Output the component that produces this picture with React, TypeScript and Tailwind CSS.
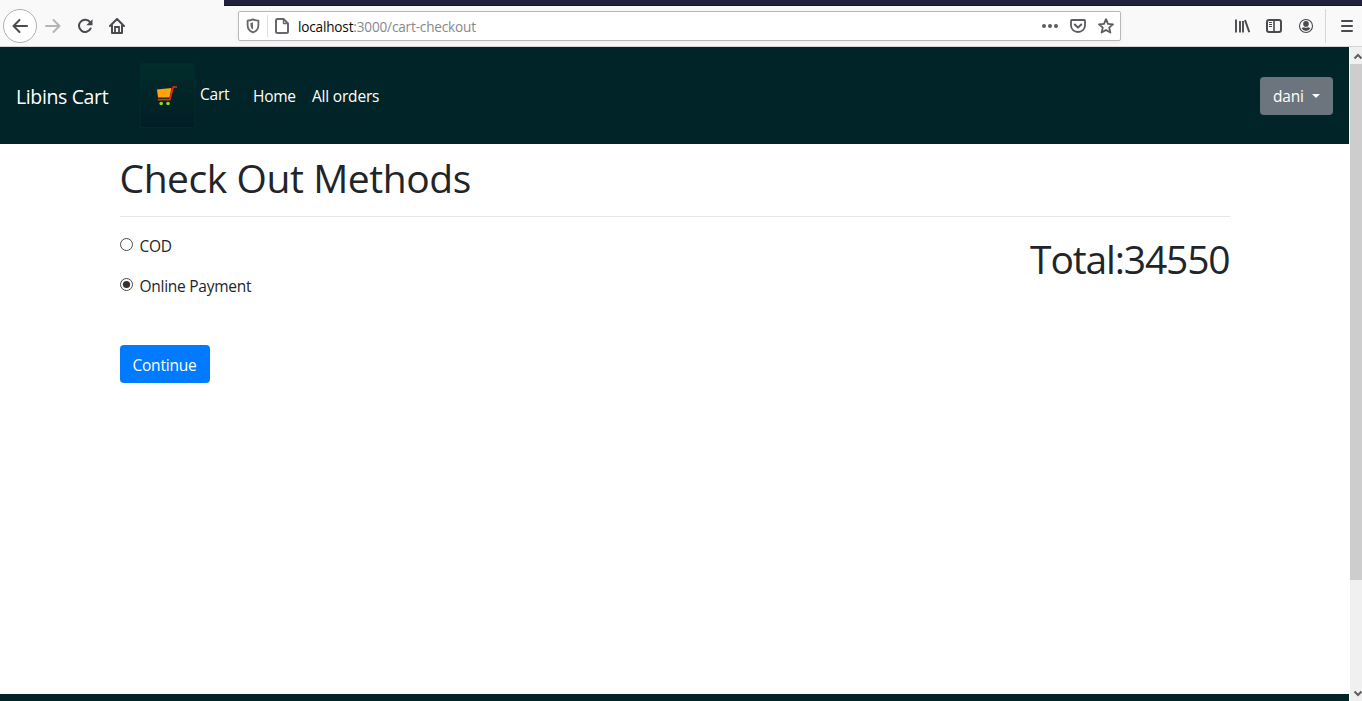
import React, { useState } from "react";

function BrowserToolbar() {
  return (
    <header className="flex h-[47px] flex-col border-b border-[#d4d4d6] bg-[#f9f9fa]">
      <div className="ml-[224px] h-[6px] shrink-0 border-b border-[#17122b] bg-[#20203f]" />
      <div className="flex h-10 items-center text-[#4a4a4f]">
        <button className="ml-[3px] flex size-[34px] items-center justify-center rounded-full border border-[#b1b1b3] bg-white">
          <svg width="16" height="16" viewBox="0 0 16 16" fill="none" stroke="#4a4a4f" strokeWidth="2" strokeLinecap="round" strokeLinejoin="round">
            <path d="M15 8H1.5M7.5 2l-6 6 6 6" />
          </svg>
        </button>
        <svg className="ml-2" width="16" height="16" viewBox="0 0 16 16" fill="none" stroke="#b4b4b6" strokeWidth="2" strokeLinecap="round" strokeLinejoin="round">
          <path d="M1 8h13.500M8.500 2l6 6-6 6" />
        </svg>
        <svg className="ml-4" width="16" height="16" viewBox="0 0 16 16">
          <path d="M13 4.200A6.100 6.100 0 1 0 13.600 10.500" fill="none" stroke="#4a4a4f" strokeWidth="2" strokeLinecap="round" />
          <path d="M15.500 1.200v6h-6.200z" fill="#4a4a4f" />
        </svg>
        <svg className="ml-4" width="16" height="16" viewBox="0 0 16 16" fill="none" stroke="#4a4a4f" strokeWidth="2" strokeLinecap="round" strokeLinejoin="round">
          <path d="M1 8l7-7 7 7M3 7.500V15h10V7.500" />
          <path d="M6 14.500V9h4v5.500" strokeWidth="1.800" strokeLinecap="butt" strokeLinejoin="miter" />
        </svg>
        <div className="ml-[113px] flex h-[30px] w-[883px] items-center rounded-[2px] border border-[#b9b9bb] bg-white shadow-[0_1px_4px_rgba(0,0,0,0.06)]">
          <svg className="ml-[6px]" width="16" height="16" viewBox="0 0 16 16" fill="none" stroke="#68686c" strokeWidth="1.800" strokeLinejoin="round">
            <path d="M8 1.400c2 .9 3.700 1.200 5.400 1.300v4.500c0 3.700-2.200 6-5.400 7.200-3.200-1.200-5.400-3.500-5.400-7.200V2.700C4.300 2.600 6 2.300 8 1.400z" />
            <path d="M8 4.300v7.300C6.300 10.700 5.500 9.300 5.500 7.300V4.900C6.400 4.800 7.200 4.600 8 4.300z" fill="#68686c" stroke="none" />
          </svg>
          <div className="ml-[6px] h-[22px] w-px bg-[#dddddf]" />
          <svg className="ml-[6px]" width="16" height="16" viewBox="0 0 16 16" fill="none" stroke="#68686c" strokeWidth="2" strokeLinejoin="round">
            <path d="M3.500 1h6L14 5.500v8c0 1-.5 1.500-1.500 1.500h-9C2.500 15 2 14.500 2 13.500v-11C2 1.500 2.500 1 3.500 1z" />
            <path d="M9.500 1v4.500H14" strokeWidth="1.400" />
          </svg>
          <span className="ml-[8px] flex-1 whitespace-pre pt-[2px] font-['Open_Sans','Noto_Sans',sans-serif] text-[13.600px] leading-5 tracking-[-0.180px] text-[#88888b]">
            <span className="text-[#0c0c0d]">localhost</span>:3000/cart-checkout
          </span>
          <svg width="16" height="16" viewBox="0 0 16 16" fill="#5c5c60">
            <circle cx="2" cy="8" r="2" /><circle cx="8" cy="8" r="2" /><circle cx="14" cy="8" r="2" />
          </svg>
          <svg className="ml-3" width="16" height="16" viewBox="0 0 16 16" fill="none" stroke="#5c5c60" strokeWidth="2" strokeLinecap="round" strokeLinejoin="round">
            <path d="M1.800 2h12.400c.5 0 .8.300.8.800V7.500a7 6.500 0 0 1-14 0V2.800c0-.5.300-.8.800-.8z" strokeWidth="1.800" />
            <path d="M4.800 6.500L8 9.600l3.200-3.100" />
          </svg>
          <svg className="mr-[6px] ml-3" width="16" height="16" viewBox="0 0 16 16" fill="none" stroke="#5c5c60" strokeWidth="1.800" strokeLinejoin="round">
            <path d="M8 1.200l2 4.600 5 .5-3.800 3.300 1.200 5L8 12l-4.400 2.600 1.200-5L1 6.300l5-.5z" />
          </svg>
        </div>
        <svg className="ml-[113px]" width="16" height="16" viewBox="0 0 16 16" fill="none" stroke="#4a4a4f" strokeWidth="2">
          <path d="M2 1.500v13M6 3v11.500M9 3v11.500" strokeWidth="1.900" />
          <path d="M11 2l4.300 12.200" />
        </svg>
        <svg className="ml-4" width="16" height="16" viewBox="0 0 16 16" fill="none" stroke="#4a4a4f" strokeWidth="2">
          <rect x="1" y="2" width="14" height="12" rx="2" />
          <path d="M8 2v12" strokeWidth="1.600" />
          <path d="M3 4.500h3M3 6.500h3M3 8.500h3" strokeWidth="1" />
        </svg>
        <svg className="ml-4" width="16" height="16" viewBox="0 0 16 16">
          <circle cx="8" cy="8" r="6.500" fill="none" stroke="#4a4a4f" strokeWidth="1.100" />
          <circle cx="8" cy="5.900" r="2.800" fill="#4a4a4f" />
          <path d="M3.700 10.200c1.200-.8 1.800-1 2.400-1 1.100.7 2.700.7 3.800 0 .6 0 1.200.2 2.400 1A5 5 0 0 1 8 13a5 5 0 0 1-4.300-2.800z" fill="#4a4a4f" />
        </svg>
        <div className="ml-[11px] h-[34px] w-px bg-[#d7d7db]" />
        <svg className="ml-[13px]" width="16" height="16" viewBox="0 0 16 16" stroke="#4a4a4f" strokeWidth="2" strokeLinecap="round">
          <path d="M3 3h10M3 8h10M3 13h10" />
        </svg>
      </div>
    </header>
  );
}

function CartPicture() {
  return (
    <div className="flex h-[65px] w-[55px] items-center justify-center border border-[#012a2b] bg-linear-to-b from-[#012d2c] via-[#012527] to-[#011e26]">
      <svg className="mr-px" width="22" height="22" viewBox="0 0 22 22">
        <path d="M1 4.500L15.500 3l-2 9.500H2z" fill="#ffa509" />
        <path d="M21 2h-3.800L13.800 14.600H1.800" fill="none" stroke="#ef2a12" strokeWidth="1.600" />
        <circle cx="5.200" cy="18.500" r="1.800" fill="#86e01c" />
        <circle cx="12" cy="18.500" r="1.800" fill="#86e01c" />
      </svg>
    </div>
  );
}

function NavBar() {
  return (
    <nav className="flex h-[97px] shrink-0 items-center bg-[#012428] px-4 text-white">
      <a className="w-[124px] pt-[2px] text-[19.500px] leading-[30px] tracking-[-0.370px]">Libins Cart</a>
      <CartPicture />
      <a className="ml-[5px] w-[53px] pb-[3px] text-[15.500px] leading-6 tracking-[-0.250px]">Cart</a>
      <a className="w-[59px] text-[15.500px] leading-6 tracking-[-0.250px]">Home</a>
      <a className="text-[15.500px] leading-6 tracking-[-0.200px]">All orders</a>
      <button className="ml-auto flex h-[38px] w-[73px] items-center rounded bg-[#6c757d] pl-[13px] text-[15.500px] leading-6 tracking-[-0.200px]">
        <span className="w-[39px] text-left">dani</span>
        <svg width="8" height="4" viewBox="0 0 8 4" fill="white"><path d="M0 0h8L4 4z" /></svg>
      </button>
    </nav>
  );
}

function PaymentOption({ label, checked, onSelect }: { label: string; checked: boolean; onSelect: () => void }) {
  return (
    <label className="flex h-6 items-center">
      <input type="radio" name="payment-method" className="sr-only" checked={checked} onChange={onSelect} />
      <svg className="mb-[3px] mr-[7px]" width="13" height="13" viewBox="0 0 13 13">
        <circle cx="6.500" cy="6.500" r="6" fill="white" stroke="#4a4a4a" />
        {checked && <circle cx="6.500" cy="6.500" r="3.600" fill="#333333" />}
      </svg>
      <span className="text-[15.500px] leading-6 tracking-[-0.260px]">{label}</span>
    </label>
  );
}

function Checkout() {
  const [method, setMethod] = useState("Online Payment");
  return (
    <main className="mx-auto w-[1110px] flex-1 pt-[10px] text-[#212529]">
      <h1 className="text-[39px] leading-[48px] tracking-[-0.430px]">Check Out Methods</h1>
      <hr className="mt-[14px] border-t border-[#e5e5e5]" />
      <div className="flex justify-between">
        <form className="pt-[17px]">
          <div className="flex flex-col gap-4">
            {["COD", "Online Payment"].map((name) => (
              <PaymentOption key={name} label={name} checked={method === name} onSelect={() => setMethod(name)} />
            ))}
          </div>
          <button type="button" className="mt-[47px] h-[38px] w-[90px] rounded bg-[#007bff] pt-[2px] text-[15.500px] leading-6 tracking-[-0.200px] text-white">Continue</button>
        </form>
        <h1 className="pt-[18px] text-[39px] leading-[48px] tracking-[-1.150px]">Total:34550</h1>
      </div>
    </main>
  );
}

function Scrollbar() {
  return (
    <aside className="flex w-[13px] flex-col items-end overflow-hidden border-l border-white bg-[#f0f0f0]">
      <svg className="h-[17px] w-3 shrink-0" viewBox="0 0 12 17" fill="none" stroke="#606060" strokeWidth="2">
        <path d="M4.500 11.500L8 8l3.500 3.500" />
      </svg>
      <div className="h-[516px] w-3 shrink-0 bg-[#cdcdcd]" />
      <svg className="mt-auto h-[17px] w-3 shrink-0" viewBox="0 0 12 17" fill="none" stroke="#606060" strokeWidth="2">
        <path d="M4.500 7.500L8 11l3.500-3.500" />
      </svg>
    </aside>
  );
}

export default function App() {
  return (
    <div className="flex h-[701px] w-[1362px] flex-col overflow-hidden bg-white font-['Open_Sans','Noto_Sans',sans-serif]">
      <BrowserToolbar />
      <div className="flex min-h-0 flex-1">
        <div className="flex w-[1349px] flex-col">
          <NavBar />
          <Checkout />
          <footer className="h-[7px] shrink-0 bg-[#012428]" />
        </div>
        <Scrollbar />
      </div>
    </div>
  );
}
